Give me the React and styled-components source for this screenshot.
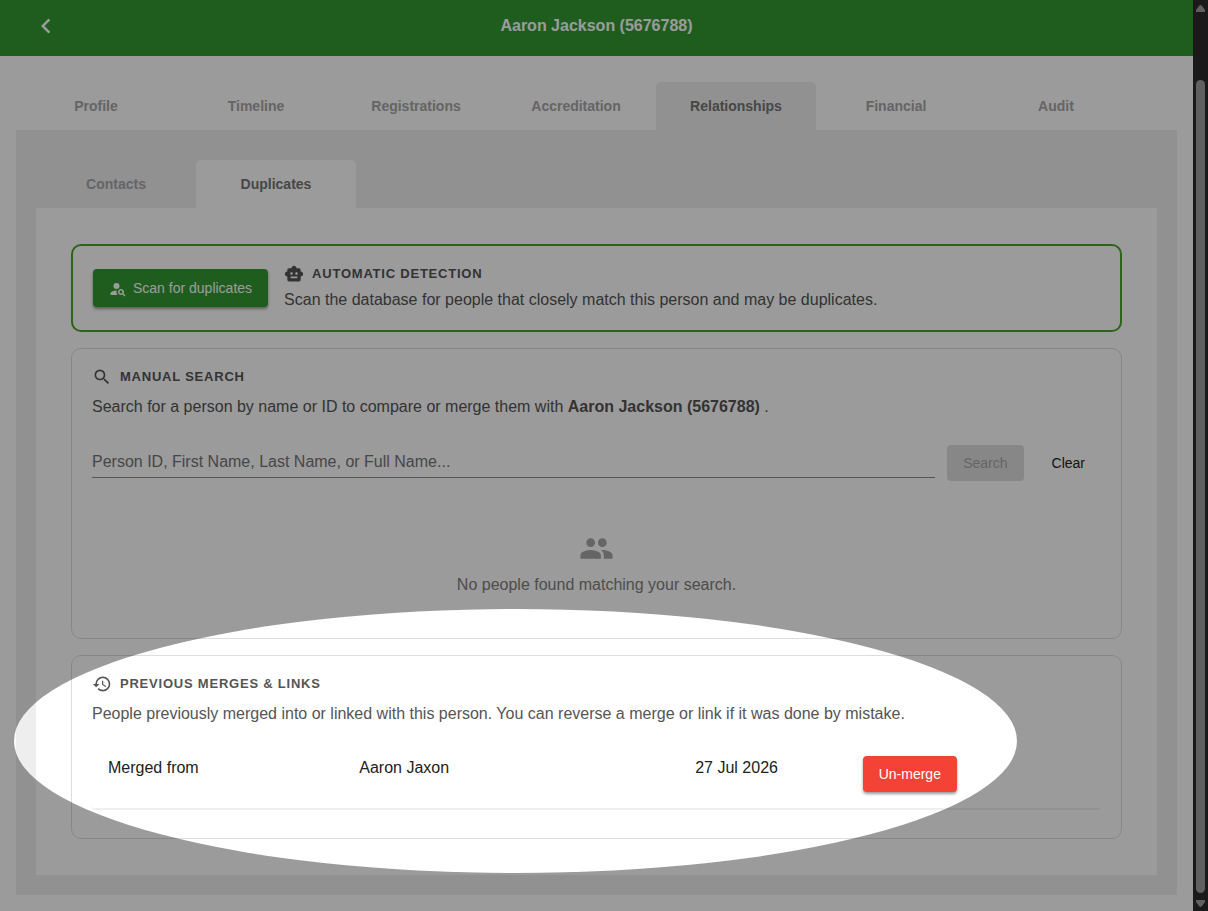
import { useState } from 'react';
import styled, { createGlobalStyle } from 'styled-components';
import {
  MdChevronLeft,
  MdHistory,
  MdPeople,
  MdPersonSearch,
  MdSearch,
  MdSmartToy,
} from 'react-icons/md';


const GlobalStyle = createGlobalStyle`
    *, *::before, *::after {
        box-sizing: border-box;
    }
    body {
        margin: 0;
        background: #ffffff;
        color: #212121;
        font-family: "Liberation Sans", Arial, sans-serif;
        font-size: 16px;
        line-height: 24px;
    }
    button, input {
        font-family: inherit;
    }
`;
const Window = styled.div`
    display: flex;
    min-height: 100vh;
    overflow: hidden;
`;
const Page = styled.div`
    flex: 1;
    min-width: 0;
`;
const Header = styled.header`
    display: grid;
    grid-template-columns: 60px 1fr 60px;
    align-items: center;
    height: 56px;
    padding: 0 16px 4px;
    background: #339933;
    color: #ffffff;
`;
const BackButton = styled.button`
    display: flex;
    justify-content: center;
    border: none;
    padding: 0;
    background: none;
    color: inherit;
    cursor: pointer;
`;
const Title = styled.h1`
    margin: 0;
    font-size: 16px;
    line-height: 24px;
    text-align: center;
`;
const Main = styled.main`
    padding: 26px 16px 16px;
`;
const TabBar = styled.nav`
    display: flex;
`;
const Tab = styled.button`
    width: 160px;
    height: 48px;
    border: none;
    border-radius: 5px 5px 0 0;
    padding: 0;
    background: ${(props) => (props.$active ? props.$fill : 'transparent')};
    color: ${(props) => (props.$active ? '#757575' : '#a6a6a6')};
    font-size: 14px;
    font-weight: bold;
    cursor: pointer;
`;
const OuterPanel = styled.section`
    padding: 30px 20px 20px;
    background: #eeeeee;
`;
const InnerPanel = styled.section`
    display: flex;
    flex-direction: column;
    gap: 16px;
    padding: 36px 35px;
    background: #ffffff;
`;
const Card = styled.section`
    position: relative;
    border: 1px solid #dddddd;
    border-radius: 10px;
    padding: 16px 20px;
`;
const ScanCard = styled(Card)`
    display: flex;
    align-items: center;
    gap: 16px;
    border: 2px solid #4ba52b;
`;
const ScanText = styled.div`
    padding-bottom: 2px;
`;
const CardTitle = styled.h2`
    display: flex;
    align-items: center;
    gap: 8px;
    margin: 0;
    color: #555555;
    font-size: 13px;
    font-weight: bold;
    letter-spacing: 0.06em;
    line-height: 24px;
    text-transform: uppercase;
`;
const CardText = styled.p`
    margin: ${(props) => (props.$tight ? '2px' : '6px')} 0 0;
    color: #555555;
`;
const Button = styled.button`
    display: inline-flex;
    align-items: center;
    justify-content: center;
    gap: 6px;
    min-width: 64px;
    height: ${(props) => (props.$small ? '36px' : '38px')};
    border: none;
    border-radius: 4px;
    padding: 0 16px;
    background: ${(props) => props.$fill || 'transparent'};
    color: ${(props) => props.$color || '#ffffff'};
    box-shadow: ${(props) => (props.$raised ? '0 2px 3px rgba(0, 0, 0, 0.4)' : 'none')};
    font-size: 14px;
    white-space: nowrap;
    cursor: pointer;

    svg {
        margin-top: 2px;
    }
`;
const SearchForm = styled.form`
    display: flex;
    align-items: flex-end;
    gap: 12px;
    margin-top: 26px;
`;
const SearchInput = styled.input`
    flex: 1;
    min-width: 0;
    height: 32px;
    margin-bottom: 3px;
    border: none;
    border-bottom: 1px solid #8c8c8c;
    padding: 0;
    background: transparent;
    color: #212121;
    font-size: 16px;
    outline: none;

    &::placeholder {
        color: #757575;
        opacity: 1;
    }
`;
const Empty = styled.div`
    display: flex;
    flex-direction: column;
    align-items: center;
    gap: 7px;
    padding: 50px 0 25px;
    color: #a6a6a6;
`;
const EmptyText = styled.p`
    margin: 0;
    color: #808080;
`;
const MergeTable = styled.table`
    width: 100%;
    margin: 14px 0 12px;
    table-layout: fixed;
    border-collapse: separate;
    border-spacing: 0;
`;
const Cell = styled.td`
    width: ${(props) => props.$width};
    border-bottom: 2px solid #eeeeee;
    padding: 16px;
    vertical-align: top;

    &:first-child {
        border-bottom-left-radius: 4px;
    }
    &:last-child {
        border-bottom-right-radius: 4px;
    }
`;
// bright ellipse over the merges card, everything around it is dimmed
const Spotlight = styled.div`
    position: absolute;
    z-index: 10;
    top: -47px;
    left: -58px;
    right: 104px;
    height: 264px;
    border-radius: 50%;
    box-shadow: 0 0 0 3000px rgba(0, 0, 0, 0.392);
    pointer-events: none;
`;
const ScrollTrack = styled.div`
    display: flex;
    flex-direction: column;
    align-items: center;
    width: 15px;
    padding: 5px 0 4px;
    background: #2c2c2c;
    color: #9f9f9f;
`;
const ScrollThumb = styled.div`
    flex: 1;
    width: 9px;
    margin: 68px 0 7px;
    border-radius: 5px;
    background: #9f9f9f;
`;


const tabs = ['Profile', 'Timeline', 'Registrations', 'Accreditation', 'Relationships', 'Financial', 'Audit'];
const subTabs = ['Contacts', 'Duplicates'];
const merges = [
  { type: 'Merged from', name: 'Aaron Jaxon', date: '27 Jul 2026' },
];

const Arrow = ({ down }) => (
  <svg width="9" height="7" viewBox="0 0 9 7" aria-hidden="true">
    <path
      d={down ? 'M0 0h9v2L6 6q-1.500 2-3 0L0 2z' : 'M0 7h9V5L6 1q-1.500-2-3 0L0 5z'}
      fill="currentColor"
    />
  </svg>
);

const App = () => {
  const [tab, setTab] = useState('Relationships');
  const [subTab, setSubTab] = useState('Duplicates');
  const [query, setQuery] = useState('');

  return (
    <Window>
      <GlobalStyle />
      <Page>
        <Header>
          <BackButton aria-label="Back"><MdChevronLeft size={30} /></BackButton>
          <Title>Aaron Jackson (5676788)</Title>
        </Header>
        <Main>
          <TabBar>
            {tabs.map((name) => (
              <Tab key={name} $fill="#eeeeee" $active={name === tab} onClick={() => setTab(name)}>{name}</Tab>
            ))}
          </TabBar>
          <OuterPanel>
            <TabBar>
              {subTabs.map((name) => (
                <Tab key={name} $fill="#ffffff" $active={name === subTab} onClick={() => setSubTab(name)}>{name}</Tab>
              ))}
            </TabBar>
            <InnerPanel>
              <ScanCard>
                <Button $fill="#339933" $raised><MdPersonSearch size={18} />Scan for duplicates</Button>
                <ScanText>
                  <CardTitle><MdSmartToy size={20} />Automatic detection</CardTitle>
                  <CardText $tight>Scan the database for people that closely match this person and may be duplicates.</CardText>
                </ScanText>
              </ScanCard>

              <Card>
                <CardTitle><MdSearch size={20} />Manual search</CardTitle>
                <CardText>
                  Search for a person by name or ID to compare or merge them with <b>Aaron Jackson (5676788)</b> .
                </CardText>
                <SearchForm onSubmit={(e) => e.preventDefault()}>
                  <SearchInput
                    aria-label="Person"
                    placeholder="Person ID, First Name, Last Name, or Full Name..."
                    value={query}
                    onChange={(e) => setQuery(e.target.value)}
                  />
                  <Button type="submit" $fill="#dfdfdf" $color="#a6a6a6" $small disabled={!query}>Search</Button>
                  <Button type="button" $color="#212121" $small onClick={() => setQuery('')}>Clear</Button>
                </SearchForm>
                <Empty>
                  <MdPeople size={35} />
                  <EmptyText>No people found matching your search.</EmptyText>
                </Empty>
              </Card>

              <Card>
                <CardTitle><MdHistory size={20} />Previous merges &amp; links</CardTitle>
                <CardText>
                  People previously merged into or linked with this person. You can reverse a merge or link if it was done by mistake.
                </CardText>
                <MergeTable>
                  <tbody>
                    {merges.map((merge) => (
                      <tr key={merge.name}>
                        <Cell $width="24.9%">{merge.type}</Cell>
                        <Cell $width="33.3%">{merge.name}</Cell>
                        <Cell $width="16.6%">{merge.date}</Cell>
                        <Cell><Button $fill="#f44336" $raised $small>Un-merge</Button></Cell>
                      </tr>
                    ))}
                  </tbody>
                </MergeTable>
                <Spotlight />
              </Card>
            </InnerPanel>
          </OuterPanel>
        </Main>
      </Page>
      <ScrollTrack>
        <Arrow />
        <ScrollThumb />
        <Arrow down />
      </ScrollTrack>
    </Window>
  )
};

export default App;
